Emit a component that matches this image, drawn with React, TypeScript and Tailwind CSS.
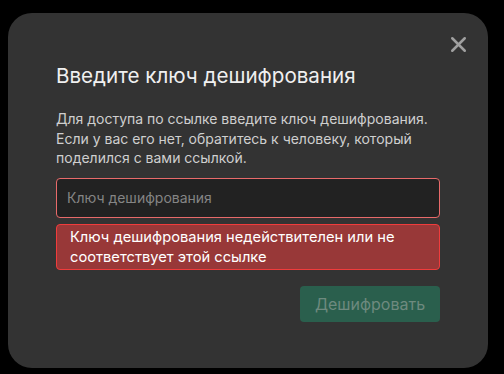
import { X } from "lucide-react";

export default function App() {
  return (
    <div
      className="w-[504px] h-[374px] bg-black pt-[13px] pl-2"
      style={{ fontFamily: "Inter, 'Noto Sans', sans-serif" }}
    >
      <div className="relative w-[480px] h-[355px] rounded-3xl bg-[#333333] px-12 pt-[49px]">
        <button className="absolute right-[17px] top-[19px] text-[#a0a0a0]">
          <X size={25} strokeWidth={2.4} className="block" />
        </button>
        <h2 className="text-[20.6px] leading-7 text-[#f0f0f0]">
          Введите ключ дешифрования
        </h2>
        <p className="mt-[19px] text-[14px] leading-[19.5px] text-[#cfcfcf]">
          Для доступа по ссылке введите ключ дешифрования. Если у вас его нет,
          обратитесь к человеку, который поделился с вами ссылкой.
        </p>
        <input
          className="mt-[10px] block w-full h-10 rounded border border-[#e86a6a] bg-[#222222] px-[10px] text-[14px] text-[#dddddd] placeholder:text-[#858585] outline-none"
          placeholder="Ключ дешифрования"
        />
        <div className="mt-[6px] rounded border border-[#f03c3c] bg-[#983838] px-[13px] py-[2px] text-[14.7px] leading-[20px] text-white">
          Ключ дешифрования недействителен или не соответствует этой ссылке
        </div>
        <div className="mt-4 flex justify-end">
          <button
            disabled
            className="h-9 w-[140px] rounded bg-[#2a5f4d] text-[16px] text-[#6e8a7f]"
          >
            Дешифровать
          </button>
        </div>
      </div>
    </div>
  );
}
